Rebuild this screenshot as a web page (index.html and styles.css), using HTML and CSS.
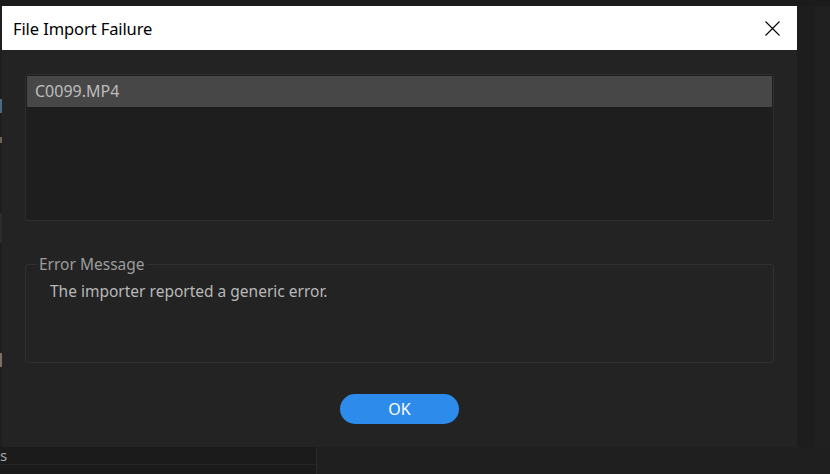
FILE: index.html
```html
<!DOCTYPE html>
<html lang="en">
<head>
<meta charset="utf-8">
<title>File Import Failure</title>
<link rel="stylesheet" href="styles.css">
</head>
<body>
<div class="app">
  <div class="top-strip"></div>
  <div class="middle">
    <div class="left-edge">
      <span class="edge-mark mark-a"></span>
      <span class="edge-mark mark-b"></span>
      <span class="edge-mark mark-c"></span>
      <span class="edge-mark mark-d"></span>
    </div>
    <div class="dialog">
      <div class="titlebar">
        <span class="title">File Import Failure</span>
        <button class="close" aria-label="Close">
          <svg width="15" height="15" viewBox="0 0 15 15"><path d="M0.5 0.5 L14.5 14.5 M14.5 0.5 L0.5 14.5" stroke="#000" stroke-width="1.1" fill="none"/></svg>
        </button>
      </div>
      <div class="dialog-body">
        <div class="file-list">
          <div class="file-item selected">C0099.MP4</div>
        </div>
        <fieldset class="error-group">
          <legend class="error-legend">Error Message</legend>
          <p class="error-text">The importer reported a generic error.</p>
        </fieldset>
        <div class="actions">
          <button class="ok-btn">OK</button>
        </div>
      </div>
    </div>
    <div class="right-panel">
      <div class="right-dark"></div>
      <div class="right-light"></div>
    </div>
  </div>
  <div class="bottom">
    <div class="bottom-left">
      <div class="bottom-row"><span class="bottom-letter">s</span></div>
      <div class="bottom-row2"></div>
    </div>
    <div class="bottom-right"></div>
  </div>
</div>
</body>
</html>
```

FILE: styles.css
```css
html, body {
  margin: 0;
  padding: 0;
}
body {
  width: 830px;
  height: 474px;
  overflow: hidden;
  background: #1c1c1c;
  font-family: "Noto Sans", "Open Sans", sans-serif;
}
.app {
  display: flex;
  flex-direction: column;
  width: 830px;
  height: 474px;
}
.top-strip {
  height: 6px;
  background: #1b1b1b;
  flex: none;
}
.middle {
  display: flex;
  height: 441px;
  flex: none;
}
.left-edge {
  width: 2px;
  background: #1e1e1e;
  display: flex;
  flex-direction: column;
  flex: none;
}
.edge-mark {
  display: block;
  width: 2px;
}
.mark-a { height: 14px; margin-top: 93px; background: #4a6a85; }
.mark-b { height: 6px; margin-top: 24px; background: #6d6550; }
.mark-c { height: 30px; margin-top: 70px; background: #2c2c2c; }
.mark-d { height: 14px; margin-top: 110px; background: #7a6f62; }
.dialog {
  width: 795px;
  background: #232323;
  display: flex;
  flex-direction: column;
  flex: none;
}
.titlebar {
  height: 44px;
  background: #ffffff;
  display: flex;
  align-items: center;
  justify-content: space-between;
  padding-left: 11px;
  padding-right: 17px;
  flex: none;
}
.title {
  font-size: 16.5px;
  color: #000;
  letter-spacing: -0.1px;
  margin-top: 1px;
}
.close {
  border: 0;
  background: transparent;
  padding: 0;
  width: 15px;
  height: 15px;
  display: block;
}
.close svg { display: block; }
.dialog-body {
  flex: 1;
  display: flex;
  flex-direction: column;
  padding: 24px 23px 0 23px;
}
.file-list {
  height: 143px;
  background: #1e1e1e;
  border: 1px solid #2f2f2f;
  border-radius: 3px;
  padding: 1px;
}
.file-item {
  height: 31px;
  line-height: 30px;
  padding-left: 8px;
  font-size: 16px;
  color: #bdbdbd;
}
.file-item.selected {
  background: #474747;
}
.error-group {
  margin: 33px 0 0 0;
  padding: 0 0 0 24px;
  border: 1px solid #303030;
  border-radius: 3px;
  height: 109px;
  box-sizing: border-box;
  min-width: 0;
}
.error-legend {
  font-size: 15.5px;
  color: #9c9c9c;
  padding: 0 2px;
  margin-left: -13px;
  line-height: 20px;
}
.error-text {
  margin: 7px 0 0 0;
  font-size: 15.5px;
  color: #b8b8b8;
  line-height: 20px;
}
.actions {
  display: flex;
  justify-content: center;
  margin-top: 31px;
}
.ok-btn {
  width: 119px;
  height: 30px;
  border: 0;
  border-radius: 15px;
  background: #2d8ceb;
  color: #ffffff;
  font-family: inherit;
  font-size: 16px;
  padding: 0;
}
.right-panel {
  flex: 1;
  display: flex;
}
.right-dark {
  width: 18px;
  background: #1d1d1d;
}
.right-light {
  flex: 1;
  background: #202020;
}
.bottom {
  flex: 1;
  display: flex;
  background: #1b1b1b;
}
.bottom-left {
  width: 316px;
  border-right: 1px solid #2a2a2a;
  display: flex;
  flex-direction: column;
}
.bottom-row {
  height: 17px;
  border-bottom: 1px solid #262626;
  display: flex;
  align-items: center;
}
.bottom-letter {
  font-size: 15px;
  color: #a8a8a8;
  margin-left: 0;
  line-height: 15px;
}
.bottom-row2 {
  flex: 1;
}
.bottom-right {
  flex: 1;
  background: #1f1f1f;
}
```
